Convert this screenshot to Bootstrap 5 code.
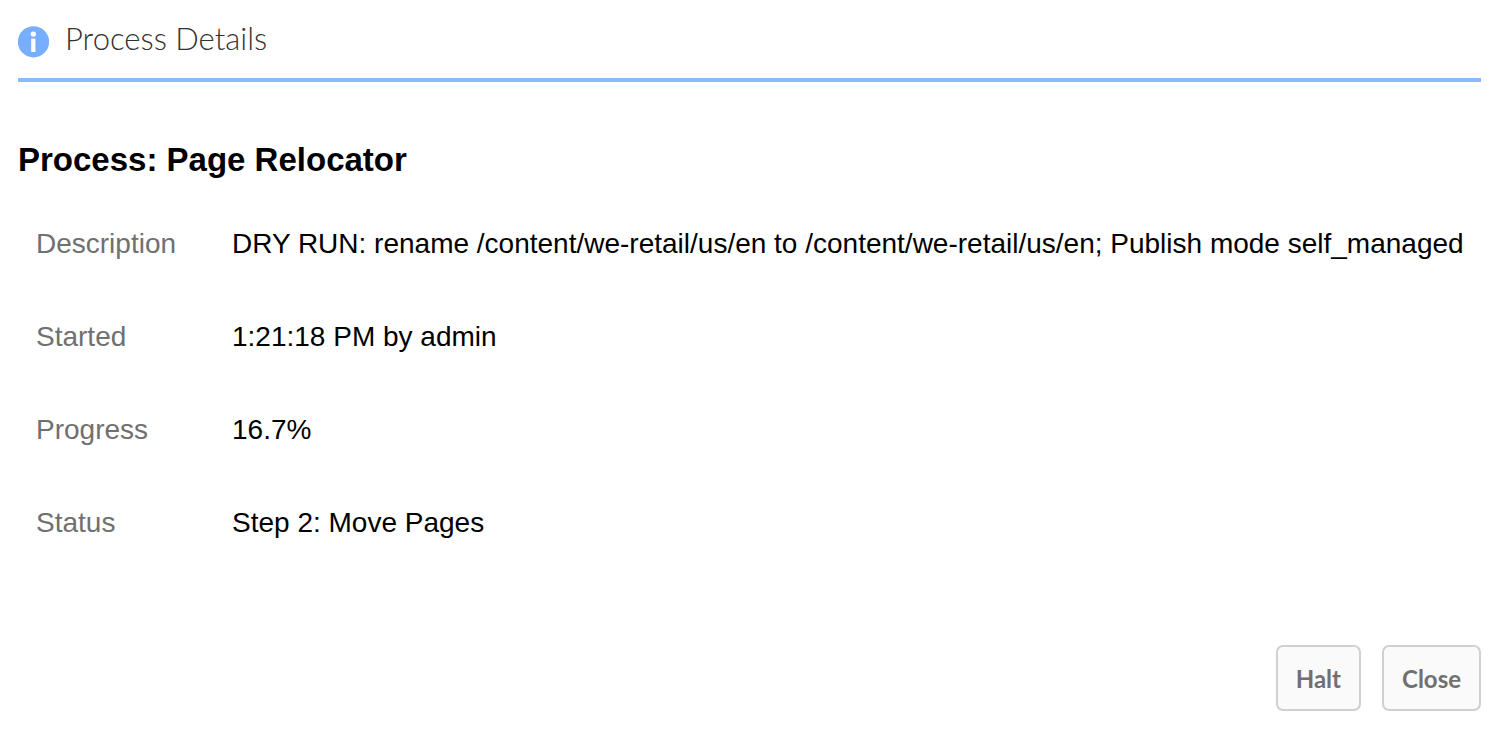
<!DOCTYPE html>
<html lang="en">
<head>
<meta charset="utf-8">
<meta name="viewport" content="width=device-width, initial-scale=1">
<title>Process Details</title>
<link href="https://cdn.jsdelivr.net/npm/bootstrap@5.3.0/dist/css/bootstrap.min.css" rel="stylesheet">
<style>
  body { font-family: "Liberation Sans", Arial, sans-serif; color: #000; background: #fff; }
  .dialog-shell { padding: 18px 12px 18px 18px; }
  .dialog-header { height: 64px; padding-bottom: 18px; border-bottom: 4px solid #85bbff; gap: 15px; }
  .dialog-title { font: 300 31px/40px Lato, sans-serif; color: #323232; }
  .info-icon { width: 32px; height: 34px; margin-top: 6px; }
  .process-name { font-size: 33px; line-height: 40px; font-weight: 700; margin: 58px 0 0; }
  .details { font-size: 28px; line-height: 32px; margin: 18px 0 75px; }
  .details th, .details td { padding: 30px 0 31px; vertical-align: top; }
  .details th { width: 214px; padding-left: 18px; font-weight: 400; color: #707070; }
  .dialog-actions { gap: 21px; }
  .btn-action {
    --bs-btn-padding-x: 18px;
    --bs-btn-font-family: Lato, sans-serif; --bs-btn-font-size: 24px;
    --bs-btn-font-weight: 700; --bs-btn-line-height: 32px;
    --bs-btn-color: #707070; --bs-btn-bg: #fafafa; --bs-btn-border-color: #d0d0d0;
    --bs-btn-hover-color: #4b4b4b; --bs-btn-hover-bg: #fff; --bs-btn-hover-border-color: #bcbcbc;
    --bs-btn-border-width: 2px; --bs-btn-border-radius: 7px;
    padding-top: 16px; padding-bottom: 14px;
  }
</style>
</head>
<body>
<main class="dialog-shell">
  <header class="dialog-header d-flex align-items-start">
    <svg class="info-icon flex-shrink-0" viewBox="0 0 32 34" aria-hidden="true">
      <circle cx="15.5" cy="17.8" r="15.6" fill="#78aeff"/>
      <circle cx="15.3" cy="10.1" r="2.7" fill="#fff"/>
      <rect x="13.2" y="14.6" width="4.2" height="13.4" fill="#fff"/>
    </svg>
    <h1 class="dialog-title m-0">Process Details</h1>
  </header>
  <h2 class="process-name">Process: Page Relocator</h2>
  <table class="details w-100">
    <tbody>
      <tr><th scope="row">Description</th><td>DRY RUN: rename /content/we-retail/us/en to /content/we-retail/us/en; Publish mode self_managed</td></tr>
      <tr><th scope="row">Started</th><td>1:21:18 PM by admin</td></tr>
      <tr><th scope="row">Progress</th><td>16.7%</td></tr>
      <tr><th scope="row">Status</th><td>Step 2: Move Pages</td></tr>
    </tbody>
  </table>
  <div class="dialog-actions d-flex justify-content-end">
    <button type="button" class="btn btn-action">Halt</button>
    <button type="button" class="btn btn-action">Close</button>
  </div>
</main>
<script src="https://cdn.jsdelivr.net/npm/bootstrap@5.3.0/dist/js/bootstrap.bundle.min.js"></script>
</body>
</html>
